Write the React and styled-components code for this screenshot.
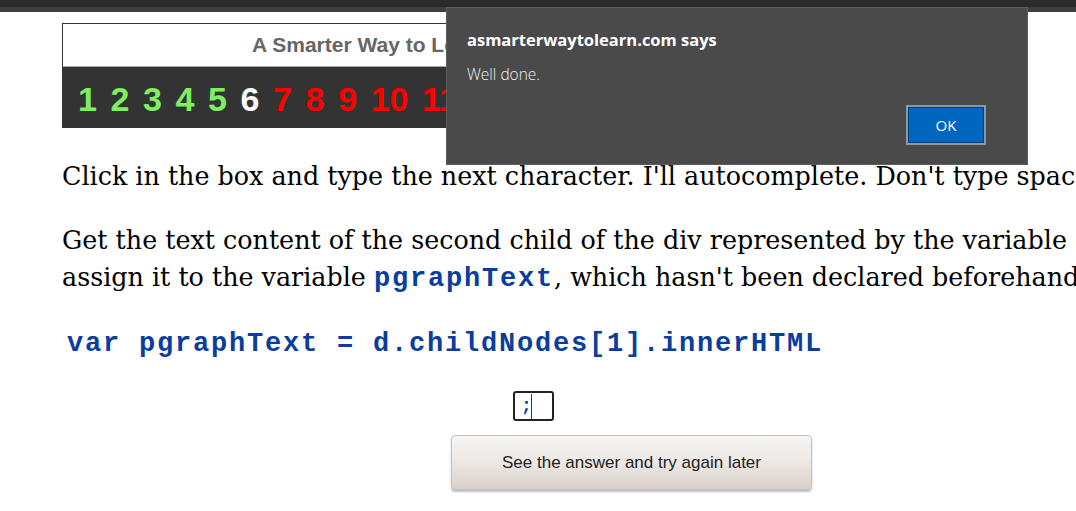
import React from "react";
import styled, { createGlobalStyle } from "styled-components";

const GlobalStyle = createGlobalStyle`
  html, body {
    margin: 0;
    padding: 0;
    background: #fff;
    overflow: hidden;
  }
`;

const numbers = [
  { n: 1, c: "#7fef5f" },
  { n: 2, c: "#7fef5f" },
  { n: 3, c: "#7fef5f" },
  { n: 4, c: "#7fef5f" },
  { n: 5, c: "#7fef5f" },
  { n: 6, c: "#ffffff" },
  { n: 7, c: "#ff0000" },
  { n: 8, c: "#ff0000" },
  { n: 9, c: "#ff0000" },
  { n: 10, c: "#ff0000" },
  { n: 11, c: "#ff0000" },
  { n: 12, c: "#ff0000" },
];

const App = () => {
  return (
    <Page>
      <GlobalStyle />
      <TopBar>
        <TopEdge />
      </TopBar>
      <Content>
        <Banner>
          <BannerTitle>A Smarter Way to Learn JavaScript</BannerTitle>
          <NumberRow>
            {numbers.map((item) => (
              <Num key={item.n} color={item.c}>
                {item.n}
              </Num>
            ))}
          </NumberRow>
        </Banner>
        <Para $first>
          Click in the box and type the next character. I'll autocomplete. Don't type spaces.
        </Para>
        <Para>
          Get the text content of the second child of the div represented by the variable d and
          <br />
          assign it to the variable <InlineCode>pgraphText</InlineCode>, which hasn't been declared beforehand.
        </Para>
        <Code>var pgraphText = d.childNodes[1].innerHTML</Code>
        <Answer>
          <Semi>;</Semi>
          <Caret />
        </Answer>
        <GiveUp>See the answer and try again later</GiveUp>
      </Content>
      <Dialog>
        <DialogTitle>asmarterwaytolearn.com says</DialogTitle>
        <DialogText>Well done.</DialogText>
        <DialogFooter>
          <OkButton>OK</OkButton>
        </DialogFooter>
      </Dialog>
    </Page>
  );
};

const Page = styled.div`
  position: relative;
  width: 1076px;
  height: 511px;
  overflow: hidden;
  background: #fff;
`;

const TopBar = styled.div`
  height: 7px;
  background: #2b2b2b;
  position: relative;
`;

const TopEdge = styled.div`
  position: absolute;
  top: 7px;
  left: 0;
  right: 0;
  height: 5px;
  background: #3e3e3e;
`;

const Content = styled.div`
  padding: 16px 0 0 62px;
  display: flex;
  flex-direction: column;
  align-items: flex-start;
  white-space: nowrap;
`;

const Banner = styled.div`
  width: 760px;
  border: 1px solid #333;
  border-bottom: none;
  display: flex;
  flex-direction: column;
`;

const BannerTitle = styled.div`
  height: 42px;
  border-bottom: 1px solid #a8a8a8;
  padding-left: 189px;
  display: flex;
  align-items: center;
  font-family: "Liberation Sans", Arial, sans-serif;
  font-weight: bold;
  font-size: 21px;
  color: #666;
`;

const NumberRow = styled.div`
  height: 61px;
  background: #333;
  display: flex;
  align-items: center;
  padding-left: 15px;
  gap: 13.6px;
`;

const Num = styled.span`
  font-family: "Liberation Sans", Arial, sans-serif;
  font-weight: bold;
  font-size: 34px;
  color: ${(p) => p.color};
  line-height: 1;
  padding-top: 2px;
`;

const Para = styled.p`
  margin: ${(p) => (p.$first ? "30px" : "27px")} 0 0;
  font-family: "DejaVu Serif", Georgia, serif;
  font-size: 25.4px;
  line-height: 37px;
  color: #000;
`;

const InlineCode = styled.span`
  font-family: "Liberation Mono", "Courier New", monospace;
  font-weight: bold;
  font-size: 27px;
  letter-spacing: 1.8px;
  color: #0a3d9e;
`;

const Code = styled.div`
  margin: 29px 0 0 5px;
  font-family: "Liberation Mono", "Courier New", monospace;
  font-weight: bold;
  font-size: 27px;
  letter-spacing: 1.8px;
  color: #0a3d9e;
  line-height: 34px;
`;

const Answer = styled.div`
  margin: 30px 0 0 451px;
  width: 31px;
  height: 26px;
  border: 2px solid #222;
  border-radius: 3px;
  display: flex;
  align-items: center;
  padding-left: 6px;
  box-sizing: content-box;
`;

const Semi = styled.span`
  font-family: "Liberation Mono", "Courier New", monospace;
  font-weight: bold;
  font-size: 18px;
  color: #0a3d9e;
`;

const Caret = styled.span`
  width: 1px;
  height: 25px;
  background: #0a3d9e;
  margin-left: -1px;
`;

const GiveUp = styled.button`
  margin: 14px 0 0 389px;
  width: 361px;
  height: 55px;
  border: 1px solid #c9c2bb;
  border-radius: 4px;
  background: linear-gradient(#f6f4f2, #ebe6e2 55%, #d9d0c8);
  box-shadow: 0 2px 2px rgba(0, 0, 0, 0.25);
  font-family: "Liberation Sans", Arial, sans-serif;
  font-size: 17px;
  color: #222;
  padding: 0;
`;

const Dialog = styled.div`
  position: absolute;
  left: 446px;
  top: 7px;
  width: 560px;
  height: 156px;
  background: #4a4a4a;
  border: 1px solid #5e5e5e;
  font-family: "Open Sans", "Noto Sans", sans-serif;
  color: #fff;
  display: flex;
  flex-direction: column;
  padding: 0 0 0 20px;
  box-sizing: content-box;
`;

const DialogTitle = styled.div`
  margin-top: 21px;
  font-weight: bold;
  font-size: 16.5px;
  line-height: 22px;
`;

const DialogText = styled.div`
  margin-top: 13px;
  font-size: 15.5px;
  font-weight: 300;
  line-height: 20px;
  color: #f0f0f0;
`;

const DialogFooter = styled.div`
  display: flex;
  justify-content: flex-end;
  padding-right: 41px;
  margin-top: 21px;
`;

const OkButton = styled.button`
  width: 80px;
  height: 40px;
  box-sizing: border-box;
  background: #0067c0;
  border: 2px solid #8b98a6;
  box-shadow: inset 0 0 0 1px #003f88;
  color: #fff;
  font-family: "Open Sans", "Noto Sans", sans-serif;
  font-size: 15px;
  padding: 0;
`;

export default App;
